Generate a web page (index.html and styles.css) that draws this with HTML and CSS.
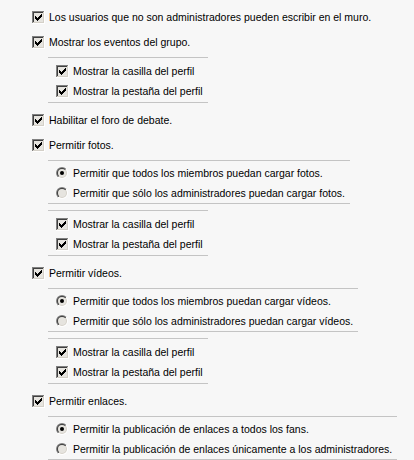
FILE: index.html
```html
<!DOCTYPE html>
<html lang="es">
<head>
  <meta charset="UTF-8">
  <title>Opciones del grupo</title>
  <link rel="stylesheet" href="styles.css">
</head>
<body>

  <svg class="defs" width="0" height="0">
    <defs>
      <symbol id="chk" viewBox="0 0 13 13">
        <rect x="0" y="0" width="13" height="13" fill="#ffffff"/>
        <rect x="0" y="0" width="12" height="1" fill="#808080"/>
        <rect x="0" y="0" width="1" height="12" fill="#808080"/>
        <rect x="1" y="1" width="11" height="11" fill="#d4d0c8"/>
        <rect x="1" y="1" width="10" height="1" fill="#404040"/>
        <rect x="1" y="1" width="1" height="10" fill="#404040"/>
        <rect x="2" y="2" width="9" height="9" fill="#e6e4df"/>
        <rect x="3" y="5" width="1" height="3" fill="#000"/>
        <rect x="4" y="6" width="1" height="3" fill="#000"/>
        <rect x="5" y="7" width="1" height="3" fill="#000"/>
        <rect x="6" y="6" width="1" height="3" fill="#000"/>
        <rect x="7" y="5" width="1" height="3" fill="#000"/>
        <rect x="8" y="4" width="1" height="3" fill="#000"/>
        <rect x="9" y="3" width="1" height="3" fill="#000"/>
      </symbol>
      <linearGradient id="rOut" x1="0" y1="0" x2="1" y2="1">
        <stop offset="0.5" stop-color="#808080"/>
        <stop offset="0.5" stop-color="#ffffff"/>
      </linearGradient>
      <linearGradient id="rIn" x1="0" y1="0" x2="1" y2="1">
        <stop offset="0.5" stop-color="#404040"/>
        <stop offset="0.5" stop-color="#d4d0c8"/>
      </linearGradient>
      <symbol id="rad" viewBox="0 0 12 12">
        <circle cx="6" cy="6" r="6" fill="url(#rOut)"/>
        <circle cx="6" cy="6" r="5" fill="url(#rIn)"/>
        <circle cx="6" cy="6" r="4" fill="#e6e4df"/>
      </symbol>
      <symbol id="radOn" viewBox="0 0 12 12">
        <circle cx="6" cy="6" r="6" fill="url(#rOut)"/>
        <circle cx="6" cy="6" r="5" fill="url(#rIn)"/>
        <circle cx="6" cy="6" r="4" fill="#e6e4df"/>
        <circle cx="6" cy="6" r="2" fill="#000"/>
      </symbol>
    </defs>
  </svg>

  <div class="settings">

    <div class="item">
      <div class="opt"><svg class="box"><use href="#chk"/></svg>Los usuarios que no son administradores pueden escribir en el muro.</div>
    </div>

    <div class="item">
      <div class="opt"><svg class="box"><use href="#chk"/></svg>Mostrar los eventos del grupo.</div>
      <div class="sub">
        <div class="row"><svg class="box"><use href="#chk"/></svg>Mostrar la casilla del perfil</div>
        <div class="row"><svg class="box"><use href="#chk"/></svg>Mostrar la pestaña del perfil</div>
      </div>
    </div>

    <div class="item">
      <div class="opt"><svg class="box"><use href="#chk"/></svg>Habilitar el foro de debate.</div>
    </div>

    <div class="item">
      <div class="opt"><svg class="box"><use href="#chk"/></svg>Permitir fotos.</div>
      <div class="sub radios">
        <div class="row"><svg class="dot"><use href="#radOn"/></svg>Permitir que todos los miembros puedan cargar fotos.</div>
        <div class="row"><svg class="dot"><use href="#rad"/></svg>Permitir que sólo los administradores puedan cargar fotos.</div>
      </div>
      <div class="sub">
        <div class="row"><svg class="box"><use href="#chk"/></svg>Mostrar la casilla del perfil</div>
        <div class="row"><svg class="box"><use href="#chk"/></svg>Mostrar la pestaña del perfil</div>
      </div>
    </div>

    <div class="item">
      <div class="opt"><svg class="box"><use href="#chk"/></svg>Permitir vídeos.</div>
      <div class="sub radios">
        <div class="row"><svg class="dot"><use href="#radOn"/></svg>Permitir que todos los miembros puedan cargar vídeos.</div>
        <div class="row"><svg class="dot"><use href="#rad"/></svg>Permitir que sólo los administradores puedan cargar vídeos.</div>
      </div>
      <div class="sub">
        <div class="row"><svg class="box"><use href="#chk"/></svg>Mostrar la casilla del perfil</div>
        <div class="row"><svg class="box"><use href="#chk"/></svg>Mostrar la pestaña del perfil</div>
      </div>
    </div>

    <div class="item">
      <div class="opt"><svg class="box"><use href="#chk"/></svg>Permitir enlaces.</div>
      <div class="sub radios">
        <div class="row"><svg class="dot"><use href="#radOn"/></svg>Permitir la publicación de enlaces a todos los fans.</div>
        <div class="row"><svg class="dot"><use href="#rad"/></svg>Permitir la publicación de enlaces únicamente a los administradores.</div>
      </div>
    </div>

  </div>

</body>
</html>
```

FILE: styles.css
```css
body {
  margin: 0;
  background: #f7f7f7;
  font-family: 'Liberation Sans', Arial, sans-serif;
  font-size: 10.5px;
  color: #000;
}

.defs {
  position: absolute;
  width: 0;
  height: 0;
}

.settings {
  padding: 7px 0 0 32px;
}

.item {
  padding-bottom: 5px;
}

.opt,
.row {
  display: flex;
  align-items: center;
  white-space: nowrap;
}

.opt {
  height: 20px;
}

.row {
  height: 20px;
}

.box {
  width: 13px;
  height: 13px;
  margin-right: 4px;
  flex: none;
}

.dot {
  width: 12px;
  height: 12px;
  margin-right: 5px;
  flex: none;
}

.sub {
  width: fit-content;
  margin: 5px 0 2px 16px;
  padding: 3px 5px 1px 8px;
  border-top: 1px solid #c4c4c4;
  border-bottom: 1px solid #c4c4c4;
}

.sub + .sub {
  margin-top: 6px;
}

.sub.radios {
  padding-top: 2px;
  padding-bottom: 0;
}
```
